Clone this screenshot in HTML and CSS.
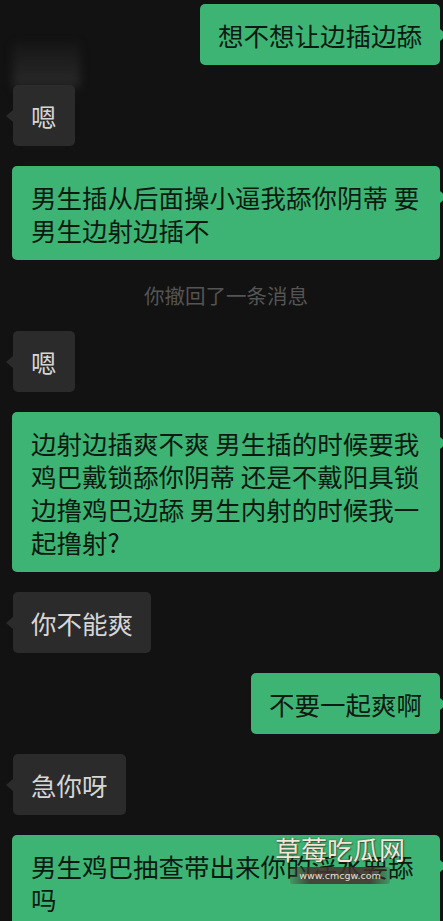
FILE: index.html
```html
<!DOCTYPE html>
<html lang="zh-CN">
<head>
    <meta charset="UTF-8">
    <meta name="viewport" content="width=device-width, initial-scale=1.0">
    <title>Chat</title>
    <link rel="stylesheet" href="styles.css">
</head>
<body>
    <div class="chat">
        <div class="row me">
            <div class="bubble green">想不想让边插边舔</div>
        </div>

        <div class="row other">
            <div class="blur-patch"></div>
            <div class="bubble gray">嗯</div>
        </div>

        <div class="row me">
            <div class="bubble green wide">男生插从后面操小逼我舔你阴蒂 要<br>男生边射边插不</div>
        </div>

        <div class="system">你撤回了一条消息</div>

        <div class="row other">
            <div class="bubble gray">嗯</div>
        </div>

        <div class="row me">
            <div class="bubble green wide">边射边插爽不爽 男生插的时候要我<br>鸡巴戴锁舔你阴蒂 还是不戴阳具锁<br>边撸鸡巴边舔 男生内射的时候我一<br>起撸射?</div>
        </div>

        <div class="row other">
            <div class="bubble gray">你不能爽</div>
        </div>

        <div class="row me">
            <div class="bubble green">不要一起爽啊</div>
        </div>

        <div class="row other">
            <div class="bubble gray">急你呀</div>
        </div>

        <div class="row me last">
            <div class="bubble green wide">男生鸡巴抽查带出来你的淫水要舔<br>吗</div>
            <div class="watermark">
                <div class="wm-title">草莓吃瓜网</div>
                <div class="wm-url">www.cmcgw.com</div>
            </div>
        </div>
    </div>
</body>
</html>
```

FILE: styles.css
```css
body {
    margin: 0;
    background: #121212;
    font-family: "Noto Sans CJK SC", "Noto Sans", sans-serif;
    overflow: hidden;
}
.chat {
    display: flex;
    flex-direction: column;
    gap: 20px;
    padding: 4px 3px 0 12px;
    height: 921px;
    box-sizing: border-box;
}
.row {
    display: flex;
    position: relative;
}
.row.me {
    justify-content: flex-end;
}
.row.other {
    justify-content: flex-start;
    padding-left: 1px;
}
.bubble {
    position: relative;
    font-size: 25.5px;
    line-height: 33px;
    padding: 14px 18px;
    border-radius: 5px;
    max-width: 428px;
    box-sizing: border-box;
    white-space: nowrap;
}
.bubble.wide {
    flex: 1;
    padding-left: 19px;
}
.bubble.green {
    background: #3db474;
    color: #0c1a11;
}
.bubble.gray {
    background: #2b2b2b;
    color: #d6d6d6;
}
.bubble.green::after {
    content: "";
    position: absolute;
    right: -7px;
    top: 25px;
    border-style: solid;
    border-width: 6px 0 6px 7px;
    border-color: transparent transparent transparent #3db474;
}
.bubble.gray::before {
    content: "";
    position: absolute;
    left: -7px;
    top: 25px;
    border-style: solid;
    border-width: 6px 7px 6px 0;
    border-color: transparent #2b2b2b transparent transparent;
}
.row.last .bubble {
    border-bottom-left-radius: 0;
    border-bottom-right-radius: 0;
}
.blur-patch {
    position: absolute;
    left: 1px;
    top: -42px;
    width: 67px;
    height: 44px;
    background: linear-gradient(180deg, rgba(42, 42, 42, 0.2) 0%, rgba(44, 44, 44, 0.9) 100%);
    filter: blur(4px);
}
.system {
    text-align: center;
    color: #545454;
    font-size: 20.5px;
    line-height: 31px;
}
.watermark {
    position: absolute;
    left: 258px;
    top: 0;
    width: 140px;
    text-align: center;
}
.wm-title {
    font-size: 26px;
    line-height: 28px;
    color: #f4e7da;
    text-shadow: 0 0 2px rgba(60, 40, 30, 0.6), 1px 1px 1px rgba(40, 30, 20, 0.5);
}
.wm-url {
    margin: 4px auto 0;
    width: 100px;
    font-family: "DejaVu Sans", sans-serif;
    font-size: 9.5px;
    line-height: 17px;
    color: #e8e0da;
    background: linear-gradient(90deg, rgba(70, 50, 45, 0.2), rgba(70, 50, 45, 0.85) 20%, rgba(70, 50, 45, 0.85) 80%, rgba(70, 50, 45, 0.2));
    border-radius: 2px;
}
```
